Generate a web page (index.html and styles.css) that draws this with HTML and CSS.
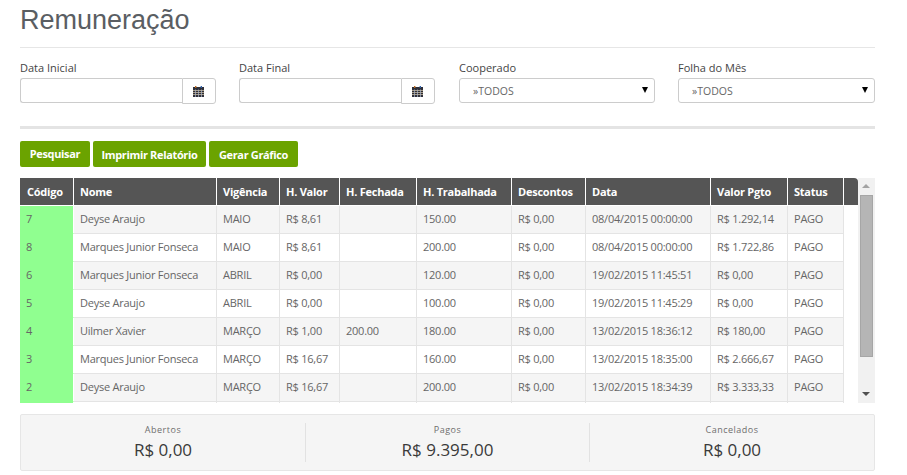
FILE: index.html
```html
<!DOCTYPE html>
<html lang="pt-BR">
<head>
<meta charset="utf-8">
<title>Remuneração</title>
<link rel="stylesheet" href="styles.css">
</head>
<body>
<main class="page">
  <h1 class="title">Remuneração</h1>
  <form class="filters">
    <div class="field">
      <label class="label">Data Inicial</label>
      <div class="input-group">
        <input class="input" type="text">
        <span class="addon"><svg class="cal" width="11" height="11" viewBox="0 0 11 11"><rect x="0" y="1" width="11" height="10" fill="#2f2f38"/><rect x="2" y="0" width="1.4" height="2" fill="#b5651d"/><rect x="7.6" y="0" width="1.4" height="2" fill="#2f5fa8"/><path d="M0 4.5h11M0 6.5h11M0 8.5h11" stroke="#d9c9a8" stroke-width=".7"/><path d="M2.5 3.5v7.5M5.5 3.5v7.5M8.5 3.5v7.5" stroke="#a9b4c8" stroke-width=".7"/></svg></span>
      </div>
    </div>
    <div class="field">
      <label class="label">Data Final</label>
      <div class="input-group">
        <input class="input" type="text">
        <span class="addon"><svg class="cal" width="11" height="11" viewBox="0 0 11 11"><rect x="0" y="1" width="11" height="10" fill="#2f2f38"/><rect x="2" y="0" width="1.4" height="2" fill="#b5651d"/><rect x="7.6" y="0" width="1.4" height="2" fill="#2f5fa8"/><path d="M0 4.5h11M0 6.5h11M0 8.5h11" stroke="#d9c9a8" stroke-width=".7"/><path d="M2.5 3.5v7.5M5.5 3.5v7.5M8.5 3.5v7.5" stroke="#a9b4c8" stroke-width=".7"/></svg></span>
      </div>
    </div>
    <div class="field">
      <label class="label">Cooperado</label>
      <div class="select-wrap"><select class="select"><option>»TODOS</option></select></div>
    </div>
    <div class="field">
      <label class="label">Folha do Mês</label>
      <div class="select-wrap"><select class="select"><option>»TODOS</option></select></div>
    </div>
  </form>
  <div class="actions">
    <button class="btn btn-search" type="button">Pesquisar</button>
    <button class="btn btn-print" type="button">Imprimir Relatório</button>
    <button class="btn btn-chart" type="button">Gerar Gráfico</button>
  </div>
  <section class="grid-box">
    <div class="table-clip">
      <table class="data">
        <colgroup>
          <col class="c1"><col class="c2"><col class="c3"><col class="c4"><col class="c5"><col class="c6"><col class="c7"><col class="c8"><col class="c9"><col class="c10"><col class="c11">
        </colgroup>
        <thead>
          <tr><th class="th-code">Código</th><th>Nome</th><th>Vigência</th><th>H. Valor</th><th>H. Fechada</th><th>H. Trabalhada</th><th>Descontos</th><th>Data</th><th>Valor Pgto</th><th>Status</th><th class="corner"></th></tr>
        </thead>
        <tbody>
          <tr><td class="code">7</td><td>Deyse Araujo</td><td>MAIO</td><td>R$ 8,61</td><td></td><td>150.00</td><td>R$ 0,00</td><td>08/04/2015 00:00:00</td><td>R$ 1.292,14</td><td>PAGO</td><td class="gap"></td></tr>
          <tr><td class="code">8</td><td>Marques Junior Fonseca</td><td>MAIO</td><td>R$ 8,61</td><td></td><td>200.00</td><td>R$ 0,00</td><td>08/04/2015 00:00:00</td><td>R$ 1.722,86</td><td>PAGO</td><td class="gap"></td></tr>
          <tr><td class="code">6</td><td>Marques Junior Fonseca</td><td>ABRIL</td><td>R$ 0,00</td><td></td><td>120.00</td><td>R$ 0,00</td><td>19/02/2015 11:45:51</td><td>R$ 0,00</td><td>PAGO</td><td class="gap"></td></tr>
          <tr><td class="code">5</td><td>Deyse Araujo</td><td>ABRIL</td><td>R$ 0,00</td><td></td><td>100.00</td><td>R$ 0,00</td><td>19/02/2015 11:45:29</td><td>R$ 0,00</td><td>PAGO</td><td class="gap"></td></tr>
          <tr><td class="code">4</td><td>Uilmer Xavier</td><td>MARÇO</td><td>R$ 1,00</td><td>200.00</td><td>180.00</td><td>R$ 0,00</td><td>13/02/2015 18:36:12</td><td>R$ 180,00</td><td>PAGO</td><td class="gap"></td></tr>
          <tr><td class="code">3</td><td>Marques Junior Fonseca</td><td>MARÇO</td><td>R$ 16,67</td><td></td><td>160.00</td><td>R$ 0,00</td><td>13/02/2015 18:35:00</td><td>R$ 2.666,67</td><td>PAGO</td><td class="gap"></td></tr>
          <tr><td class="code">2</td><td>Deyse Araujo</td><td>MARÇO</td><td>R$ 16,67</td><td></td><td>200.00</td><td>R$ 0,00</td><td>13/02/2015 18:34:39</td><td>R$ 3.333,33</td><td>PAGO</td><td class="gap"></td></tr>
          <tr class="next"><td class="code"></td><td></td><td></td><td></td><td></td><td></td><td></td><td></td><td></td><td></td><td class="gap"></td></tr>
        </tbody>
      </table>
    </div>
    <div class="scrollbar">
      <span class="arrow arrow-up"></span>
      <span class="thumb"></span>
      <span class="arrow arrow-down"></span>
    </div>
  </section>
  <section class="summary">
    <div class="stat"><span class="stat-label">Abertos</span><strong class="stat-value">R$ 0,00</strong></div>
    <div class="stat"><span class="stat-label">Pagos</span><strong class="stat-value">R$ 9.395,00</strong></div>
    <div class="stat"><span class="stat-label">Cancelados</span><strong class="stat-value">R$ 0,00</strong></div>
  </section>
</main>
</body>
</html>
```

FILE: styles.css
```css
* { box-sizing: border-box; }
html, body { margin: 0; padding: 0; background: #fff; }
body { font-family: "Open Sans", sans-serif; font-size: 11px; color: #666; overflow: hidden; }
.page { width: 855px; margin-left: 20px; }
.title {
  margin: 0;
  height: 48px;
  padding-top: 4px;
  font-family: "Liberation Sans", Arial, sans-serif;
  font-size: 27px;
  line-height: 33px;
  font-weight: 400;
  color: #5a5e63;
  border-bottom: 1px solid #e6e6e6;
}
.filters {
  display: grid;
  grid-template-columns: 196px 197px 196px 197px;
  column-gap: 23px;
  height: 81px;
  padding-top: 12px;
  border-bottom: 3px solid #e4e4e4;
}
.label { display: block; height: 18px; line-height: 16px; color: #444; font-size: 11px; }
.input-group { display: flex; width: 196px; height: 25px; }
.input {
  flex: 1;
  min-width: 0;
  height: 25px;
  border: 1px solid #ccc;
  border-right: 0;
  border-radius: 3px 0 0 3px;
  background: #fff;
}
.addon {
  display: flex;
  flex: none;
  align-items: center;
  justify-content: center;
  width: 34px;
  height: 26px;
  padding-right: 1px;
  border: 1px solid #ccc;
  border-radius: 0 3px 3px 0;
  background: #fff;
}
.select-wrap { position: relative; height: 25px; }
.select-wrap::after {
  content: "";
  position: absolute;
  right: 7px;
  top: 9px;
  border-left: 3px solid transparent;
  border-right: 3px solid transparent;
  border-top: 6px solid #000;
  pointer-events: none;
}
.select {
  appearance: none;
  width: 100%;
  height: 25px;
  padding: 0 13px;
  border: 1px solid #ccc;
  border-radius: 3px;
  background: #fff;
  font: 400 10.5px "Open Sans", sans-serif;
  color: #666;
}
.actions { display: flex; gap: 3px; padding-top: 12px; height: 49px; }
.btn {
  height: 26px;
  padding: 0;
  border: 0;
  border-radius: 2px;
  background: #6ba300;
  color: #fff;
  font: 700 11px "Open Sans", sans-serif;
  letter-spacing: -.35px;
}
.btn-search { width: 70px; padding-bottom: 2px; }
.btn-print { width: 113px; }
.btn-chart { width: 89px; }
.grid-box { display: flex; height: 225px; }
.table-clip { width: 838px; height: 225px; overflow: hidden; }
.data { width: 838px; table-layout: fixed; border-collapse: separate; border-spacing: 0; letter-spacing: -.24px; }
.c1 { width: 54px; } .c2 { width: 143px; } .c3 { width: 63px; } .c4 { width: 60px; }
.c5 { width: 77px; } .c6 { width: 95px; } .c7 { width: 74px; } .c8 { width: 125px; }
.c9 { width: 77px; } .c10 { width: 56px; } .c11 { width: 14px; }
.data th {
  height: 28px;
  padding: 0 6px;
  background: #555;
  color: #fff;
  font-size: 11px;
  font-weight: 700;
  text-align: left;
  white-space: nowrap;
  border-right: 1px solid #fff;
  border-bottom: 1px solid #fff;
}
.data th.th-code { padding-left: 7px; padding-right: 0; }
.data th.corner { border-right: 0; border-top-right-radius: 4px; }
.data td {
  height: 28px;
  padding: 0 6px 2px;
  font-size: 11px;
  white-space: nowrap;
  color: #666;
  border-right: 1px solid #e4e4e4;
  border-bottom: 1px solid #e4e4e4;
}
.data tbody tr:nth-child(odd) td { background: #f5f5f5; }
.data tbody tr td.code { background: #90ff90; border-right-color: #fff; border-bottom-color: #90ff90; }
.data tbody tr td.gap { background: #fff; border: 0; }
.data tbody tr.next td { background: #fff; }
.data tbody tr.next td.code { background: #90ff90; }
.scrollbar {
  display: flex;
  flex-direction: column;
  align-items: center;
  width: 17px;
  height: 225px;
  background: #f1f1f1;
}
.arrow { position: relative; display: block; width: 17px; flex: none; }
.arrow-up { height: 17px; }
.arrow-down { height: 46px; }
.arrow::after { content: ""; position: absolute; left: 4px; border-left: 4px solid transparent; border-right: 4px solid transparent; }
.arrow-up::after { top: 6px; border-bottom: 4px solid #a3a3a3; }
.arrow-down::after { bottom: 7px; border-top: 4px solid #505050; }
.thumb { display: block; flex: none; width: 13px; height: 162px; background: #b5b5b5; border: 1px solid #a6a6a6; }
.summary {
  display: grid;
  grid-template-columns: 285px 284px 1fr;
  height: 57px;
  margin-top: 11px;
  padding: 8px 0;
  background: #f5f5f5;
  border: 1px solid #e6e6e6;
  border-radius: 2px;
}
.stat { display: flex; flex-direction: column; align-items: center; border-right: 1px solid #e2e2e2; }
.stat:last-child { border-right: 0; }
.stat-label { height: 15px; line-height: 14px; font-size: 9px; letter-spacing: .5px; color: #6e6e6e; }
.stat-value { font-size: 17px; line-height: 24px; font-weight: 400; color: #3a3a3a; }
```
